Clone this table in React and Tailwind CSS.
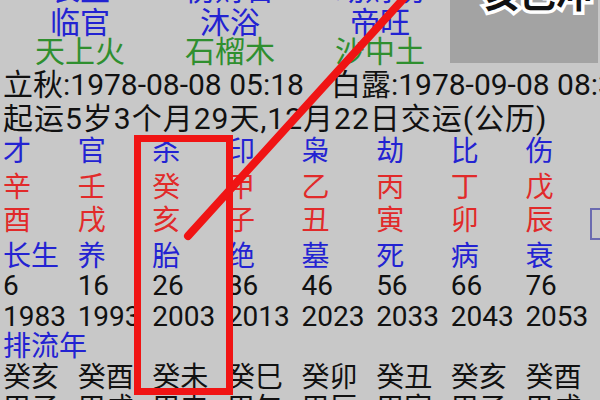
const topRows = [
  { cls: "mt-[-25px] text-[#2323d2]", cells: ["长生", "伤财合", "劫财伤"] },
  { cls: "mt-[5px] text-[#2323d2]", cells: ["临官", "沐浴", "帝旺"] },
  { cls: "mt-[1px] text-[#2f8f2f]", cells: ["天上火", "石榴木", "沙中土"] },
];

const gridRows = [
  { cls: "mt-[5px] text-[#2323d2]", cells: ["才", "官", "杀", "印", "枭", "劫", "比", "伤"] },
  { cls: "mt-[8px] text-[#e12a2a]", cells: ["辛", "壬", "癸", "甲", "乙", "丙", "丁", "戊"] },
  { cls: "mt-[5px] text-[#e12a2a]", cells: ["酉", "戌", "亥", "子", "丑", "寅", "卯", "辰"] },
  { cls: "mt-[8px] text-[#2323d2]", cells: ["长生", "养", "胎", "绝", "墓", "死", "病", "衰"] },
  { cls: "mt-[1px] text-[#111]", cells: ["6", "16", "26", "36", "46", "56", "66", "76"] },
  { cls: "mt-[3px] text-[#111]", cells: ["1983", "1993", "2003", "2013", "2023", "2033", "2043", "2053"] },
];

const liunian = [
  { cls: "mt-[3px]", cells: ["癸亥", "癸酉", "癸未", "癸巳", "癸卯", "癸丑", "癸亥", "癸酉"] },
  { cls: "mt-[3px]", cells: ["甲子", "甲戌", "甲申", "甲午", "甲辰", "甲寅", "甲子", "甲戌"] },
];

function GridRow({ cls, cells }) {
  return (
    <div className={`grid grid-cols-8 h-[28px] items-center leading-none whitespace-nowrap ${cls}`}>
      {cells.map((c, i) => (
        <span key={i}>{c}</span>
      ))}
    </div>
  );
}

export default function App() {
  return (
    <div className="relative w-[600px] h-[400px] overflow-hidden bg-[#c8c8c8] text-[28px] text-[#111] font-['Roboto','Noto_Sans_CJK_SC',sans-serif]">
      <div className="pl-[5px]">
        {topRows.map((r, i) => (
          <div key={i} className={`grid grid-cols-[150px_150px_150px] h-[28px] items-center text-center text-[30px] leading-none ${r.cls}`}>
            {r.cells.map((c) => (
              <span key={c}>{c}</span>
            ))}
          </div>
        ))}
      </div>

      <div className="pl-[3px]">
        <div className="mt-[6px] h-[28px] flex items-center gap-[27px] leading-none whitespace-nowrap text-[30px]">
          <span>立秋:1978-08-08 05:18</span>
          <span>白露:1978-09-08 08:36</span>
        </div>
        <div className="mt-[6px] h-[28px] flex items-center leading-none whitespace-nowrap text-[30px] tracking-[1px]">
          起运5岁3个月29天,12月22日交运(公历)
        </div>
        {gridRows.map((r, i) => (
          <GridRow key={i} {...r} />
        ))}
        <div className="mt-[2px] h-[28px] flex items-center leading-none text-[#2323d2]">排流年</div>
        {liunian.map((r, i) => (
          <GridRow key={i} {...r} />
        ))}
      </div>

      {/* sticker in the top right corner */}
      <div className="absolute left-[450px] top-0 w-[148px] h-[63px] bg-[#a3a3a3] overflow-hidden">
        <div className="absolute left-[34px] top-[-22px] text-[36px] leading-none font-bold text-[#111] [paint-order:stroke_fill] [-webkit-text-stroke:7px_white]">
          亥巳冲
        </div>
      </div>

      {/* small button at the right edge */}
      <div className="absolute left-[590px] top-[208px] w-[20px] h-[32px] border-2 border-[#6a6ab0]" />

      {/* red annotations */}
      <svg className="absolute inset-0 pointer-events-none" width="600" height="400" viewBox="0 0 600 400">
        <rect x="137.5" y="138.5" width="92" height="253" fill="none" stroke="#f01414" strokeWidth="7" />
        <line x1="406" y1="-4" x2="188" y2="236" stroke="#f01414" strokeWidth="8" strokeLinecap="round" />
      </svg>
    </div>
  );
}
